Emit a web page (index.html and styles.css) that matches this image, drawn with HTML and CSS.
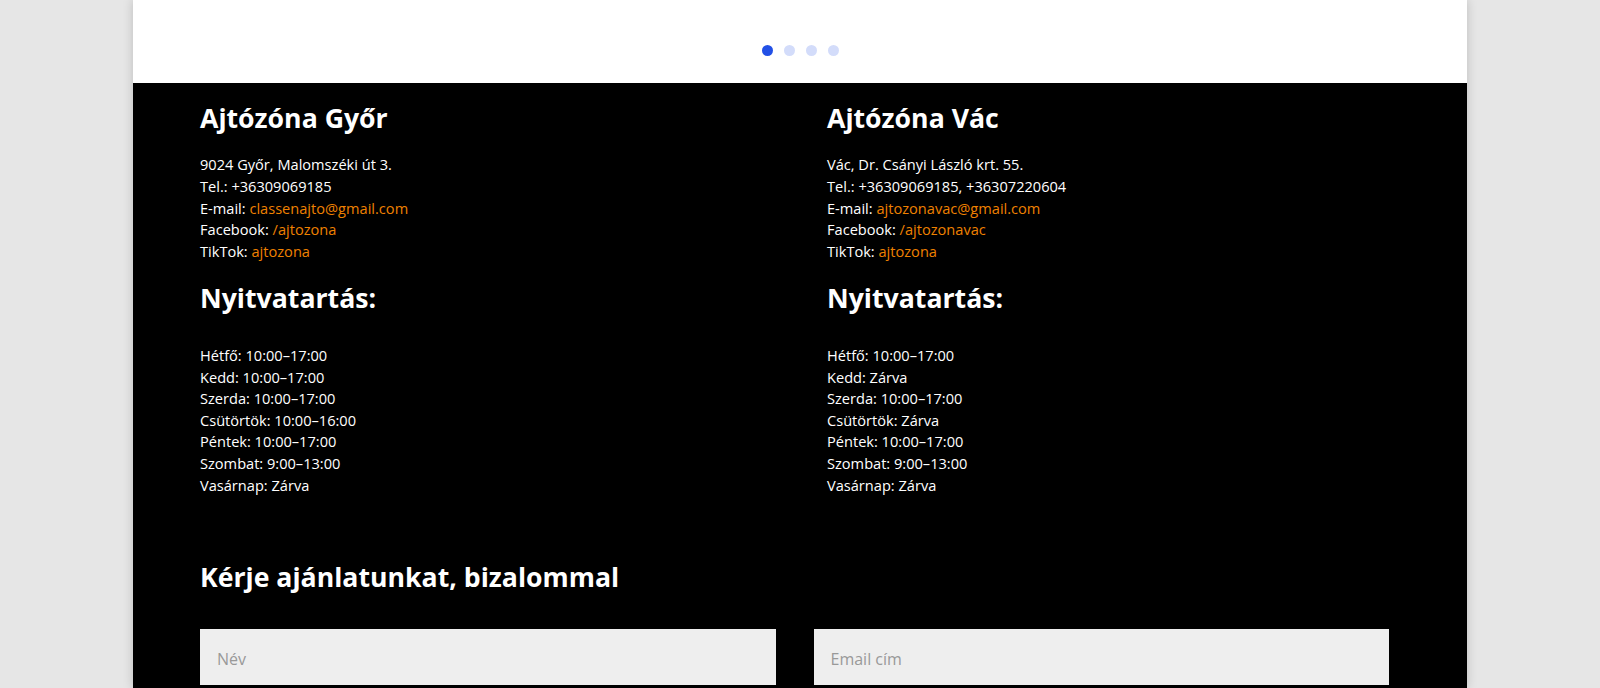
FILE: index.html
```html
<!DOCTYPE html>
<html lang="hu">
<head>
<meta charset="utf-8">
<title>Ajtózóna</title>
<link rel="stylesheet" href="styles.css">
</head>
<body>
<div class="page">
  <div class="slider-end">
    <div class="dots">
      <span class="dot active"></span>
      <span class="dot"></span>
      <span class="dot"></span>
      <span class="dot"></span>
    </div>
  </div>
  <footer class="contact">
    <div class="row">
      <div class="col">
        <h2 class="title">Ajtózóna Győr</h2>
        <p class="info">9024 Győr, Malomszéki út 3.<br>
        Tel.: +36309069185<br>
        E-mail: <a href="#">classenajto@gmail.com</a><br>
        Facebook: <a href="#">/ajtozona</a><br>
        TikTok: <a href="#">ajtozona</a></p>
        <h2 class="title hours-title">Nyitvatartás:</h2>
        <p class="hours">Hétfő: 10:00–17:00<br>
        Kedd: 10:00–17:00<br>
        Szerda: 10:00–17:00<br>
        Csütörtök: 10:00–16:00<br>
        Péntek: 10:00–17:00<br>
        Szombat: 9:00–13:00<br>
        Vasárnap: Zárva</p>
      </div>
      <div class="col">
        <h2 class="title">Ajtózóna Vác</h2>
        <p class="info">Vác, Dr. Csányi László krt. 55.<br>
        Tel.: +36309069185, +36307220604<br>
        E-mail: <a href="#">ajtozonavac@gmail.com</a><br>
        Facebook: <a href="#">/ajtozonavac</a><br>
        TikTok: <a href="#">ajtozona</a></p>
        <h2 class="title hours-title">Nyitvatartás:</h2>
        <p class="hours">Hétfő: 10:00–17:00<br>
        Kedd: Zárva<br>
        Szerda: 10:00–17:00<br>
        Csütörtök: Zárva<br>
        Péntek: 10:00–17:00<br>
        Szombat: 9:00–13:00<br>
        Vasárnap: Zárva</p>
      </div>
    </div>
    <div class="form-wrap">
      <h2 class="title form-title">Kérje ajánlatunkat, bizalommal</h2>
      <form class="form">
        <input class="field" type="text" placeholder="Név">
        <input class="field" type="email" placeholder="Email cím">
      </form>
    </div>
  </footer>
</div>
</body>
</html>
```

FILE: styles.css
```css
* { box-sizing: border-box; }

html, body {
  margin: 0;
  padding: 0;
  height: 100%;
  overflow: hidden;
}

body {
  background: #e6e6e6;
  font-family: "Open Sans", "Noto Sans", sans-serif;
  color: #fff;
}

.page {
  width: 1334px;
  margin: 0 auto;
  min-height: 100%;
  background: #000;
  box-shadow: 0 0 10px rgba(0, 0, 0, 0.18);
}

.slider-end {
  height: 83px;
  background: #fff;
  display: flex;
  justify-content: center;
  padding-top: 45px;
}

.dots {
  display: flex;
  gap: 11px;
  height: 11px;
}

.dot {
  width: 11px;
  height: 11px;
  border-radius: 50%;
  background: #d3dcfa;
}

.dot.active {
  background: #2250e6;
}

.contact {
  padding: 17px 0 0 67px;
}

.row {
  width: 1189px;
  display: flex;
  gap: 65px;
}

.col {
  width: 562px;
}

.title {
  margin: 0;
  font-size: 26.67px;
  line-height: 36px;
  font-weight: 700;
  color: #fff;
}

.info, .hours {
  margin: 0;
  font-size: 14.6px;
  line-height: 21.8px;
}

.hours {
  line-height: 21.6px;
}

.info {
  margin-top: 18px;
}

.info a {
  color: #ef8100;
  text-decoration: none;
}

.hours-title {
  margin-top: 17px;
}

.hours {
  margin-top: 29px;
}

.form-wrap {
  width: 1189px;
  margin-top: 63px;
}

.form {
  margin-top: 34px;
  display: flex;
  gap: 38px;
}

.field {
  width: 576px;
  height: 56px;
  border: 0;
  background: #eeeeee;
  padding: 3px 17px 0;
  font-family: "Open Sans", "Noto Sans", sans-serif;
  font-size: 16px;
  color: #333;
  outline: none;
}

.field::placeholder {
  color: #999;
}
```
